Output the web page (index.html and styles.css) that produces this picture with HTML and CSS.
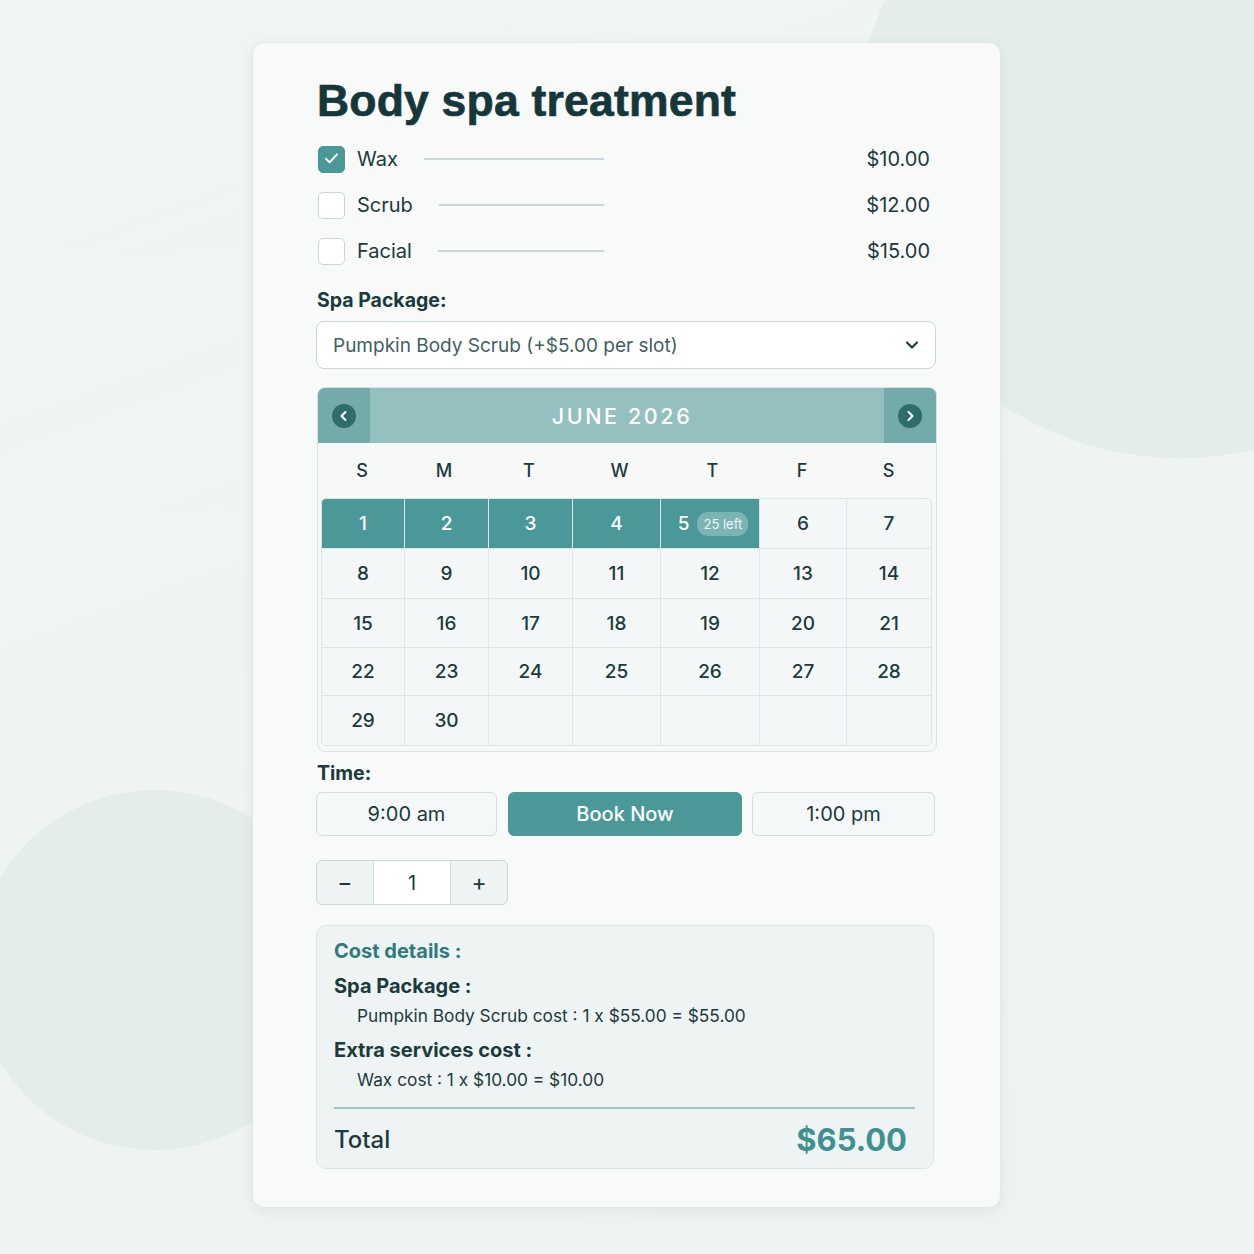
FILE: index.html
```html
<!DOCTYPE html>
<html>
<head>
<meta charset="utf-8">
<link rel="stylesheet" href="styles.css">
</head>
<body>
<div class="page">
<div class="bg-circle c1"></div>
<div class="bg-circle c2"></div>
<div class="card">
  <h1 class="title">Body spa treatment</h1>

  <div class="svc first">
    <div class="svc-left">
      <span class="cb checked"><svg viewBox="0 0 27 27" width="27" height="27"><path d="M8 13.8l3.6 3.6 7.4-8" fill="none" stroke="#fff" stroke-width="2" stroke-linecap="round" stroke-linejoin="round"/></svg></span>
      <span class="svc-name">Wax</span>
      <span class="svc-line"></span>
    </div>
    <span class="svc-price">$10.00</span>
  </div>
  <div class="svc">
    <div class="svc-left">
      <span class="cb"></span>
      <span class="svc-name">Scrub</span>
      <span class="svc-line"></span>
    </div>
    <span class="svc-price">$12.00</span>
  </div>
  <div class="svc">
    <div class="svc-left">
      <span class="cb"></span>
      <span class="svc-name">Facial</span>
      <span class="svc-line"></span>
    </div>
    <span class="svc-price">$15.00</span>
  </div>

  <div class="label lbl-pkg">Spa Package:</div>
  <div class="select">
    <span>Pumpkin Body Scrub (+$5.00 per slot)</span>
    <svg class="chev" viewBox="0 0 14 10" width="14" height="10"><path d="M2 2.5l5 5 5-5" fill="none" stroke="#1d3d3f" stroke-width="2.2" stroke-linecap="round" stroke-linejoin="round"/></svg>
  </div>

  <div class="cal">
    <div class="cal-head">
      <div class="nav"><span class="nav-btn"><svg viewBox="0 0 22 22" width="22" height="22"><path d="M12.5 7l-4 4 4 4" fill="none" stroke="#fff" stroke-width="2" stroke-linecap="round" stroke-linejoin="round"/></svg></span></div>
      <div class="month">JUNE 2026</div>
      <div class="nav"><span class="nav-btn"><svg viewBox="0 0 22 22" width="22" height="22"><path d="M9.5 7l4 4-4 4" fill="none" stroke="#fff" stroke-width="2" stroke-linecap="round" stroke-linejoin="round"/></svg></span></div>
    </div>
    <div class="cal-body">
      <div class="wk">
        <span>S</span><span>M</span><span>T</span><span>W</span><span>T</span><span>F</span><span>S</span>
      </div>
      <div class="days">
        <span class="d sel">1</span><span class="d sel">2</span><span class="d sel">3</span><span class="d sel">4</span><span class="d sel">5<em class="badge">25 left</em></span><span class="d">6</span><span class="d">7</span>
        <span class="d">8</span><span class="d">9</span><span class="d">10</span><span class="d">11</span><span class="d">12</span><span class="d">13</span><span class="d">14</span>
        <span class="d">15</span><span class="d">16</span><span class="d">17</span><span class="d">18</span><span class="d">19</span><span class="d">20</span><span class="d">21</span>
        <span class="d">22</span><span class="d">23</span><span class="d">24</span><span class="d">25</span><span class="d">26</span><span class="d">27</span><span class="d">28</span>
        <span class="d">29</span><span class="d">30</span><span class="d"></span><span class="d"></span><span class="d"></span><span class="d"></span><span class="d"></span>
      </div>
    </div>
  </div>

  <div class="label lbl-time">Time:</div>
  <div class="times">
    <button class="tbtn t1">9:00 am</button>
    <button class="tbtn book">Book Now</button>
    <button class="tbtn t3">1:00 pm</button>
  </div>

  <div class="qty">
    <span class="q-btn">−</span>
    <span class="q-val">1</span>
    <span class="q-btn">+</span>
  </div>

  <div class="cost">
    <div class="cost-title">Cost details :</div>
    <div class="cost-h">Spa Package :</div>
    <div class="cost-line">Pumpkin Body Scrub cost : 1 x $55.00 = $55.00</div>
    <div class="cost-h">Extra services cost :</div>
    <div class="cost-line">Wax cost : 1 x $10.00 = $10.00</div>
    <div class="cost-divider"></div>
    <div class="total">
      <span class="total-l">Total</span>
      <span class="total-v">$65.00</span>
    </div>
  </div>
</div>
</div>
</body>
</html>
```

FILE: styles.css
```css
* { box-sizing: border-box; }
html, body { margin: 0; padding: 0; }
body {
  font-family: Inter, Roboto, "Liberation Sans", sans-serif;
  color: #1d3a3c;
}
.page {
  position: relative;
  width: 1254px;
  height: 1254px;
  overflow: hidden;
  background: linear-gradient(160deg, #eff4f4 0%, #eef3f3 60%, #edf2f2 100%);
  padding-top: 42px;
}
.bg-circle {
  position: absolute;
  border-radius: 50%;
  background: #e4ecec;
  z-index: 0;
}
.c1 { left: 856px; top: -190px; width: 648px; height: 648px; }
.c2 { left: -25px; top: 790px; width: 360px; height: 360px; }

.card {
  position: relative;
  z-index: 1;
  width: 749px;
  height: 1166px;
  margin-left: 252px;
  background: #f8f9f9;
  border: 1px solid #e2e8e8;
  border-radius: 12px;
  box-shadow: 0 3px 12px rgba(40, 70, 70, 0.07);
  padding: 32px 64px 40px 64px;
}
.title {
  margin: 0;
  font-family: "Liberation Sans", Arial, sans-serif;
  font-weight: 700;
  font-size: 44.5px;
  line-height: 52px;
  color: #163739;
  letter-spacing: 0.2px;
  -webkit-text-stroke: 0.7px #163739;
}

.svc {
  display: flex;
  align-items: center;
  height: 46px;
  padding-right: 6px;
}
.svc.first { margin-top: 9px; }
.svc-left {
  display: flex;
  align-items: center;
  width: 287px;
}
.cb {
  width: 27px;
  height: 27px;
  border-radius: 5px;
  border: 1.5px solid #cad7d8;
  background: #fff;
  margin-left: 1px;
  margin-right: 12px;
  flex: none;
  display: flex;
}
.cb.checked {
  background: #4a9898;
  border-color: #4a9898;
}
.cb.checked svg { margin: -1.5px; }
.svc-name {
  font-size: 20px;
  color: #1d3a3c;
}
.svc-line {
  flex: 1;
  height: 1.5px;
  background: #cbd6d8;
  margin-left: 26px;
}
.svc-price {
  margin-left: auto;
  font-size: 20px;
  color: #1d3a3c;
}

.label {
  font-size: 19.5px;
  font-weight: 700;
  line-height: 24px;
  color: #1b3a3c;
}
.lbl-pkg { margin-top: 14px; }
.select {
  margin-top: 9px;
  height: 48px;
  width: 620px;
  margin-left: -1px;
  border: 1.5px solid #cad7d8;
  border-radius: 8px;
  background: #fff;
  display: flex;
  align-items: center;
  padding: 0 16px 0 16px;
  font-size: 19px;
  color: #3f5f61;
}
.chev { margin-left: auto; }

.cal {
  margin-top: 18px;
  width: 620px;
  border: 1px solid #d8e2e2;
  border-radius: 8px;
  overflow: hidden;
  background: #f7f9f9;
}
.cal-head {
  height: 55px;
  display: flex;
  background: #94c1c0;
}
.nav {
  width: 52px;
  background: #74aaa9;
  display: flex;
  align-items: center;
  justify-content: center;
}
.nav-btn {
  width: 24px;
  height: 24px;
  border-radius: 50%;
  background: #2f6c6c;
  display: flex;
  align-items: center;
  justify-content: center;
}
.month {
  flex: 1;
  display: flex;
  align-items: center;
  justify-content: center;
  color: #fff;
  font-size: 21.5px;
  font-weight: 500;
  letter-spacing: 2.6px;
  padding-right: 10px;
}
.cal-body {
  padding: 0 4px 5px 3px;
}
.wk {
  display: grid;
  grid-template-columns: 82px 82px 88px 93px 93px 86px 1fr;
  height: 55px;
  align-items: center;
  font-size: 18px;
  font-weight: 500;
  color: #1d3a3c;
}
.wk span { text-align: center; }
.days {
  display: grid;
  grid-template-columns: 82px 83px 83px 87px 98px 86px 1fr;
  grid-template-rows: 49px 49px 48px 47px 49px;
  gap: 1px;
  background: #dde5e6;
  border: 1px solid #dde5e6;
  border-radius: 5px;
  overflow: hidden;
}
.d {
  background: #f4f7f7;
  display: flex;
  align-items: center;
  justify-content: center;
  font-size: 19px;
  font-weight: 500;
  color: #1d3a3c;
}
.d.sel {
  background: #4a9898;
  color: #fff;
}
.badge {
  font-style: normal;
  font-size: 13px;
  font-weight: 400;
  color: #f0f7f7;
  background: rgba(255, 255, 255, 0.28);
  border-radius: 11px;
  padding: 4px 6px;
  margin-left: 8px;
  margin-right: -6px;
}

.lbl-time { margin-top: 9px; }
.times {
  margin-top: 7px;
  margin-left: -1px;
  display: flex;
  gap: 10px;
  height: 44px;
}
.tbtn {
  height: 44px;
  border: 1.5px solid #d4dede;
  background: #f5f8f8;
  border-radius: 6px;
  font-family: Inter, Roboto, "Liberation Sans", sans-serif;
  font-size: 20px;
  color: #1d3a3c;
  padding: 0;
}
.t1 { width: 181px; }
.book {
  width: 234px;
  background: #4a9898;
  border-color: #4a9898;
  color: #fff;
  font-weight: 500;
  margin-left: 1px;
}
.t3 { width: 183px; }

.qty {
  margin-top: 24px;
  margin-left: -1px;
  width: 192px;
  height: 45px;
  border: 1.5px solid #cdd8d9;
  border-radius: 6px;
  display: flex;
  overflow: hidden;
  background: #eef3f3;
}
.q-btn {
  width: 56px;
  display: flex;
  align-items: center;
  justify-content: center;
  font-size: 23px;
  color: #1d3a3c;
}
.q-val {
  width: 79px;
  background: #fff;
  border-left: 1.5px solid #d2dcdd;
  border-right: 1.5px solid #d2dcdd;
  display: flex;
  align-items: center;
  justify-content: center;
  font-size: 20px;
  color: #1d3a3c;
}

.cost {
  margin-top: 20px;
  margin-left: -1px;
  width: 618px;
  height: 244px;
  background: #eef4f4;
  border: 1.5px solid #dde6e6;
  border-radius: 10px;
  padding: 13px 18px 0 17px;
}
.cost-title {
  font-size: 20px;
  font-weight: 700;
  line-height: 24px;
  color: #2f7b7a;
}
.cost-h {
  margin-top: 11px;
  font-size: 20px;
  font-weight: 700;
  line-height: 24px;
  color: #1b3a3c;
}
.cost-line {
  margin-top: 7px;
  padding-left: 23px;
  font-size: 17.3px;
  line-height: 22px;
  color: #1d3a3c;
}
.cost-divider {
  margin-top: 16px;
  height: 2px;
  background: #a9c4c4;
}
.total {
  height: 44px;
  margin-top: 8px;
  display: flex;
  align-items: center;
  padding-right: 8px;
}
.total-l {
  font-size: 24px;
  font-weight: 500;
  color: #1d3a3c;
}
.total-v {
  margin-left: auto;
  font-size: 31px;
  font-weight: 700;
  color: #3f9191;
}
```
